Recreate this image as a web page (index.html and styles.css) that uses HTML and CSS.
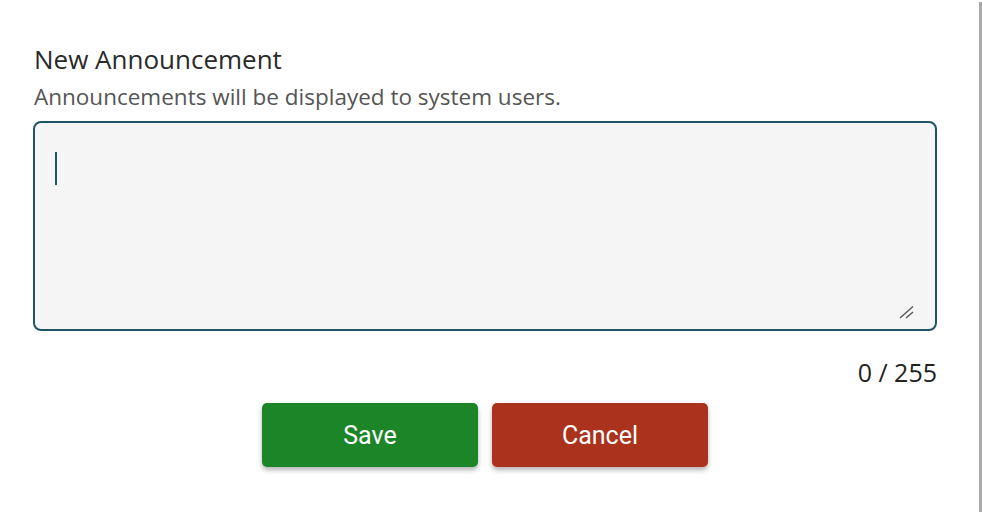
FILE: index.html
```html
<!DOCTYPE html>
<html>
<head>
<meta charset="utf-8">
<link rel="stylesheet" href="styles.css">
</head>
<body>
<div class="frame">
  <div class="dialog">
    <h2 class="title">New Announcement</h2>
    <p class="subtitle">Announcements will be displayed to system users.</p>
    <div class="field">
      <span class="caret"></span>
      <svg class="grip" width="15" height="14" viewBox="0 0 15 14"><path d="M1 13 L14 1.5 M7 13 L14 7" stroke="#555" stroke-width="1.3" fill="none"/></svg>
    </div>
    <div class="counter">0 / 255</div>
    <div class="actions">
      <button class="btn save">Save</button>
      <button class="btn cancel">Cancel</button>
    </div>
  </div>
  <div class="edge"></div>
</div>
</body>
</html>
```
FILE: styles.css
```css
html, body { margin: 0; padding: 0; background: #fff; }
.frame { display: flex; width: 982px; height: 512px; }
.dialog { width: 903px; padding: 0 0 0 34px; font-family: "Open Sans", sans-serif; }
.edge { margin-left: auto; margin-top: 2px; width: 3px; background: #a9a9a9; }
.title { margin: 42px 0 0 0; font-weight: 400; font-size: 26px; line-height: 34px; color: #2a2a2a; }
.subtitle { margin: 7px 0 0 0; font-size: 22.5px; line-height: 28px; color: #555; }
.field { position: relative; margin: 10px 0 0 -1px; border: 2.5px solid #1f5468; border-radius: 8px; background: #f5f5f5; box-sizing: border-box; height: 210px; width: 904px; }
.caret { position: absolute; left: 20px; top: 29px; width: 2px; height: 33px; background: #1f5468; }
.grip { position: absolute; right: 21px; bottom: 10px; }
.counter { margin-top: 25px; text-align: right; font-size: 25px; line-height: 32px; color: #222; width: 903px; }
.actions { display: flex; gap: 14px; margin: 15px 0 0 228px; }
.btn { width: 216px; height: 64px; border: none; border-radius: 5px; color: #fff; font-family: Roboto, sans-serif; font-size: 25px; box-shadow: 0 3px 5px rgba(0,0,0,0.3); }
.save { background: #1b8528; }
.cancel { background: #ab321c; }
```
